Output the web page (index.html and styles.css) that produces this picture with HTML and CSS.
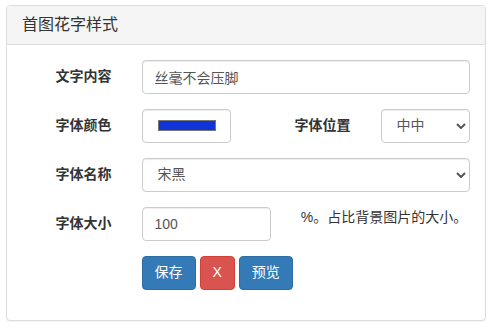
FILE: index.html
```html
<!DOCTYPE html>
<html>
<head>
    <meta charset="utf-8">
    <title>首图花字样式</title>
    <link rel="stylesheet" href="styles.css">
</head>
<body>
    <div class="panel">
        <div class="panel-heading">
            <h3 class="panel-title">首图花字样式</h3>
        </div>
        <div class="panel-body">
            <form class="form-horizontal">
                <div class="form-group">
                    <label class="col col-3 control-label">文字内容</label>
                    <div class="col col-9">
                        <input class="form-control" type="text" value="丝毫不会压脚">
                    </div>
                </div>
                <div class="form-group">
                    <label class="col col-3 control-label">字体颜色</label>
                    <div class="col col-3">
                        <div class="form-control color-box"><span class="swatch"></span></div>
                    </div>
                    <label class="col col-3 control-label">字体位置</label>
                    <div class="col col-3">
                        <div class="select-wrap">
                            <select class="form-control">
                                <option>中中</option>
                            </select>
                            <svg class="caret" width="10" height="6" viewBox="0 0 10 6"><path d="M1 1 L5 5 L9 1" fill="none" stroke="#555" stroke-width="2"/></svg>
                        </div>
                    </div>
                </div>
                <div class="form-group">
                    <label class="col col-3 control-label">字体名称</label>
                    <div class="col col-9">
                        <div class="select-wrap">
                            <select class="form-control">
                                <option>宋黑</option>
                            </select>
                            <svg class="caret" width="10" height="6" viewBox="0 0 10 6"><path d="M1 1 L5 5 L9 1" fill="none" stroke="#555" stroke-width="2"/></svg>
                        </div>
                    </div>
                </div>
                <div class="form-group">
                    <label class="col col-3 control-label">字体大小</label>
                    <div class="col col-4">
                        <input class="form-control" type="text" value="100">
                    </div>
                    <div class="col col-5 help">%。占比背景图片的大小。</div>
                </div>
                <div class="form-group">
                    <div class="col col-offset-3 col-9 btns">
                        <button type="button" class="btn btn-primary">保存</button>
                        <button type="button" class="btn btn-danger">X</button>
                        <button type="button" class="btn btn-primary">预览</button>
                    </div>
                </div>
            </form>
        </div>
    </div>
</body>
</html>
```

FILE: styles.css
```css
* { box-sizing: border-box; }
body {
    margin: 0;
    padding: 5px 9px 10px 6px;
    font-family: "Liberation Sans", "Noto Sans CJK SC", sans-serif;
    font-size: 14px;
    line-height: 1.42857;
    color: #333;
    background: #fff;
}
.panel {
    border: 1px solid #ddd;
    border-radius: 4px;
    background: #fff;
    box-shadow: 0 1px 1px rgba(0,0,0,0.05);
}
.panel-heading {
    padding: 10px 15px;
    background: #f5f5f5;
    border-bottom: 1px solid #ddd;
    border-radius: 3px 3px 0 0;
}
.panel-title {
    margin: 0;
    font-size: 16px;
    font-weight: normal;
    line-height: 1.1;
    color: #333;
}
.panel-body { padding: 15px; }
.form-horizontal { margin: 0; }
.form-group {
    display: flex;
    margin: 0 -15px 15px;
}
.col { padding: 0 15px; }
.col-3 { width: 25%; }
.col-4 { width: 33.3333%; }
.col-5 { width: 41.6667%; }
.col-9 { width: 75%; }
.col-offset-3 { margin-left: 25%; }
.control-label {
    padding-top: 7px;
    text-align: right;
    font-weight: bold;
}
.form-control {
    display: block;
    width: 100%;
    height: 34px;
    padding: 6px 12px;
    font-family: inherit;
    font-size: 14px;
    line-height: 1.42857;
    color: #555;
    background: #fff;
    border: 1px solid #ccc;
    border-radius: 4px;
    box-shadow: inset 0 1px 1px rgba(0,0,0,0.075);
}
.color-box {
    display: flex;
    align-items: center;
    padding: 0 14px 0 15px;
}
.swatch {
    display: block;
    width: 100%;
    height: 11px;
    background: #1034d8;
    border: 1px solid #777;
}
.select-wrap { position: relative; }
.select-wrap select {
    appearance: none;
    -webkit-appearance: none;
    padding-left: 15px;
}
.caret {
    position: absolute;
    right: 4px;
    top: 14px;
    pointer-events: none;
}
.help { padding-top: 1px; }
.btns {
    display: flex;
    gap: 4px;
}
.btn {
    height: 34px;
    padding: 6px 12px;
    font-family: inherit;
    font-size: 14px;
    line-height: 1.42857;
    color: #fff;
    border: 1px solid transparent;
    border-radius: 4px;
    cursor: pointer;
}
.btn-primary { background: #337ab7; border-color: #2e6da4; }
.btn-danger { background: #d9534f; border-color: #d43f3a; }
```
